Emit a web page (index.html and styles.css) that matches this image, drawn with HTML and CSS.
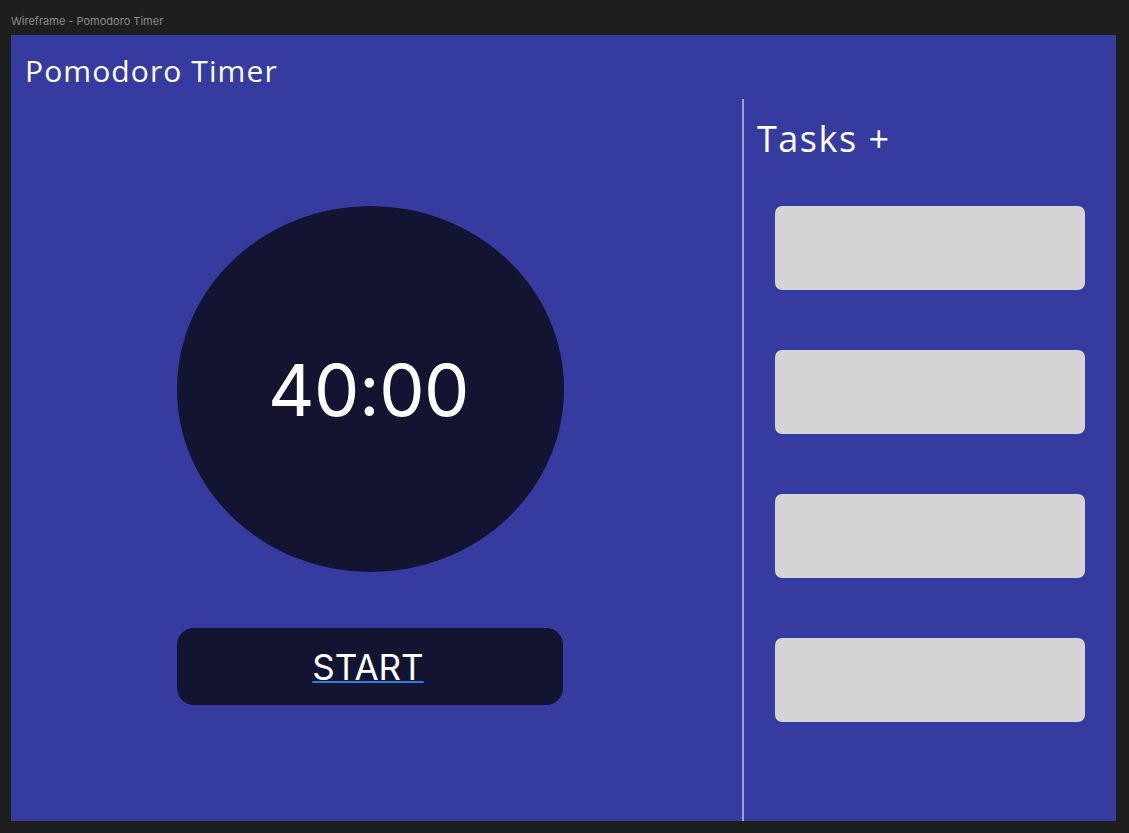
FILE: index.html
```html
<!DOCTYPE html>
<html>
<head>
<meta charset="utf-8">
<title>Wireframe - Pomodoro Timer</title>
<link rel="stylesheet" href="styles.css">
</head>
<body>
<div class="frame-label">Wireframe - Pomodoro Timer</div>
<main class="frame">
  <header class="app-header">
    <h1 class="app-title">Pomodoro Timer</h1>
  </header>
  <div class="content">
    <section class="timer-col">
      <div class="dial"><span class="time">40:00</span></div>
      <button class="start-btn"><span class="start-label">START</span></button>
    </section>
    <aside class="tasks-col">
      <h2 class="tasks-title">Tasks +</h2>
      <ul class="task-list">
        <li class="task-card"></li>
        <li class="task-card"></li>
        <li class="task-card"></li>
        <li class="task-card"></li>
      </ul>
    </aside>
  </div>
</main>
</body>
</html>
```
FILE: styles.css
```css
* { box-sizing: border-box; }
html, body {
  margin: 0;
  padding: 0;
  background: #1e1e1e;
  height: 833px;
  overflow: hidden;
}
.frame-label {
  font-family: Inter, "Liberation Sans", sans-serif;
  font-size: 11px;
  line-height: 14px;
  color: #8c8c8c;
  padding: 14px 0 0 11px;
  height: 35px;
}
.frame {
  margin-left: 11px;
  width: 1105px;
  height: 786px;
  background: #353b9f;
  display: flex;
  flex-direction: column;
  color: #ffffff;
}
.app-header {
  height: 64px;
  padding: 18px 0 0 14px;
}
.app-title {
  margin: 0;
  font-family: "Open Sans", sans-serif;
  font-weight: 400;
  font-size: 30px;
  line-height: 36px;
  letter-spacing: 1.1px;
}
.content {
  flex: 1;
  display: flex;
}
.timer-col {
  width: 733px;
  display: flex;
  flex-direction: column;
  align-items: flex-start;
  padding: 107px 0 0 166px;
  border-right: 2px solid #9ea2dc;
}
.dial {
  width: 387px;
  height: 366px;
  border-radius: 50%;
  background: #131432;
  display: flex;
  align-items: center;
  justify-content: center;
}
.time {
  font-family: Inter, sans-serif;
  font-size: 72px;
  line-height: 1;
  font-weight: 400;
  letter-spacing: -0.5px;
  padding-top: 2px;
  margin-left: -4px;
}
.start-btn {
  margin-top: 56px;
  width: 386px;
  height: 77px;
  border: none;
  border-radius: 17px;
  background: #131432;
  color: #ffffff;
  display: flex;
  align-items: center;
  justify-content: center;
  padding: 0;
  cursor: pointer;
}
.start-label {
  font-family: Inter, sans-serif;
  font-size: 35px;
  line-height: 40px;
  letter-spacing: 0;
  font-weight: 400;
  text-decoration: underline;
  text-decoration-color: #2f7ee3;
  text-decoration-thickness: 2px;
  text-underline-offset: 1px;
  margin-left: -4px;
}
.tasks-col {
  flex: 1;
  padding: 18px 31px 0 31px;
}
.tasks-title {
  margin: 0 0 0 -18px;
  font-family: "Open Sans", sans-serif;
  font-weight: 400;
  font-size: 36px;
  line-height: 44px;
  letter-spacing: 1.5px;
}
.task-list {
  list-style: none;
  margin: 45px 0 0 0;
  padding: 0;
  display: flex;
  flex-direction: column;
  gap: 60px;
}
.task-card {
  height: 84px;
  background: #d4d4d4;
  border-radius: 7px;
}
```
